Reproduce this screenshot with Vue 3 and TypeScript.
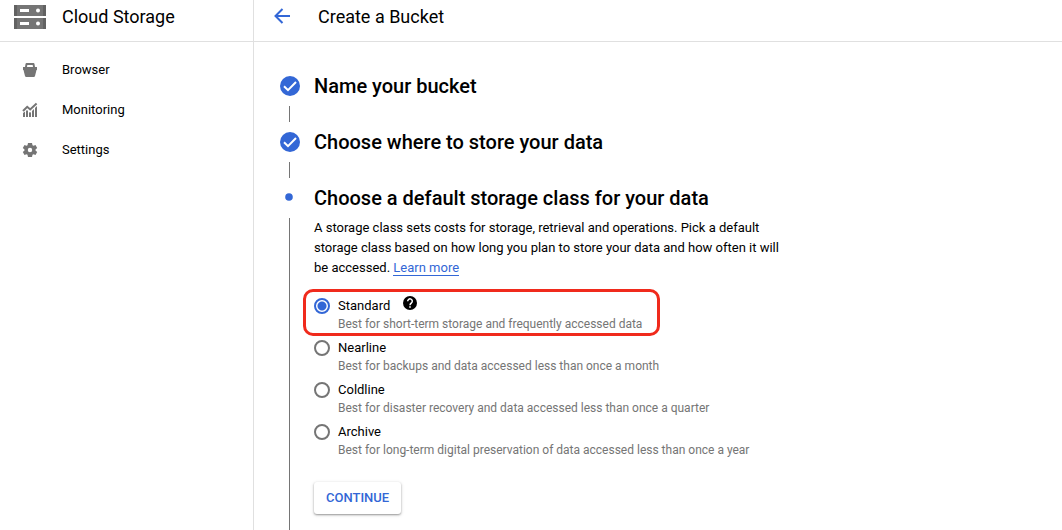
<script setup lang="ts">
import { ref } from 'vue'

interface StorageClass {
  id: string
  name: string
  detail: string
}

const navItems = [
  { id: 'browser', label: 'Browser' },
  { id: 'monitoring', label: 'Monitoring' },
  { id: 'settings', label: 'Settings' },
]

const storageClasses: StorageClass[] = [
  { id: 'standard', name: 'Standard', detail: 'Best for short-term storage and frequently accessed data' },
  { id: 'nearline', name: 'Nearline', detail: 'Best for backups and data accessed less than once a month' },
  { id: 'coldline', name: 'Coldline', detail: 'Best for disaster recovery and data accessed less than once a quarter' },
  { id: 'archive', name: 'Archive', detail: 'Best for long-term digital preservation of data accessed less than once a year' },
]

const completedSteps = ['Name your bucket', 'Choose where to store your data']
const selected = ref('standard')
</script>

<template>
  <div class="page">
    <aside class="sidebar">
      <header class="bar product">
        <svg class="product-icon" width="32" height="24" viewBox="0 0 32 24" aria-hidden="true">
          <path fill="#757575" d="M0 0h32v11H0zM0 13h32v11H0z" />
          <path fill="#626262" d="M0 0h3v11H0zM0 13h3v11H0zM29 0h3v11h-3zM29 13h3v11h-3z" />
          <path fill="#fff" d="M6 4h9v3H6zM6 17h9v3H6z" />
          <circle cx="24" cy="5.5" r="2" fill="#fff" />
          <circle cx="24" cy="18.5" r="2" fill="#fff" />
        </svg>
        <span>Cloud Storage</span>
      </header>
      <nav class="nav" aria-label="Cloud Storage">
        <a v-for="item in navItems" :key="item.id" class="nav-link" href="#">
          <svg width="16" height="16" viewBox="0 0 16 16" fill="#757575" aria-hidden="true">
            <path
              v-if="item.id === 'browser'"
              fill-rule="evenodd"
              d="M4.500 1h7Q12.300 1 12.500 2L13 5h2v3h-.5L13 14Q12.700 15 11.800 15H4.200Q3.300 15 3 14L1.500 8H1V5h2l.5-3Q3.700 1 4.500 1zM5.300 3 5 5h6l-.3-2z"
            />
            <g v-else-if="item.id === 'monitoring'">
              <path d="M1 11l2-1.500V15H1zM4 9 5 8l1 1v6H4zM7 10l1 .8 1-.8v5H7zM10 9l2-2v8h-2zM13 6l2-2v11h-2z" />
              <path fill="none" stroke="#757575" stroke-width="2" d="M1 9 5.200 4.800 8.200 7.500 14.600 1.500" />
            </g>
            <path
              v-else
              fill-rule="evenodd"
              d="M6 1h4l.5 2.200 1 .6 2-.8 1.700 3L13.500 7.400v1.200L15.200 10l-1.700 3-2-.8-1 .6L10 15H6l-.5-2.200-1-.6-2 .8L.8 10l1.700-1.400V7.400L.8 6l1.700-3 2 .8 1-.6zM8 5.800a2.200 2.200 0 1 0 0 4.400 2.200 2.200 0 0 0 0-4.400z"
            />
          </svg>
          <span>{{ item.label }}</span>
        </a>
      </nav>
    </aside>

    <div class="workspace">
      <header class="bar title-bar">
        <button class="back" type="button" aria-label="Back">
          <svg width="16" height="16" viewBox="0 0 16 16" fill="none" stroke="#3367d6" stroke-width="2" aria-hidden="true">
            <path d="M16 8H1.500M8.500 1 1.500 8l7 7" />
          </svg>
        </button>
        <h1>Create a Bucket</h1>
      </header>

      <main class="steps">
        <section v-for="step in completedSteps" :key="step" class="step">
          <div class="rail">
            <svg class="marker" width="20" height="20" viewBox="0 0 20 20" aria-hidden="true">
              <circle cx="10" cy="10" r="10" fill="#3367d6" />
              <path d="M4 10.200 8 14.200 16 6" fill="none" stroke="#fff" stroke-width="2" />
            </svg>
            <span class="connector"></span>
          </div>
          <h2>{{ step }}</h2>
        </section>

        <section class="step current">
          <div class="rail">
            <svg class="marker" width="20" height="20" viewBox="0 0 20 20" aria-hidden="true">
              <circle cx="9" cy="9" r="3.800" fill="#3367d6" />
            </svg>
            <span class="connector"></span>
          </div>
          <div class="content">
            <h2>Choose a default storage class for your data</h2>
            <p class="intro">
              A storage class sets costs for storage, retrieval and operations. Pick a default
              storage class based on how long you plan to store your data and how often it will
              be accessed. <a href="#">Learn more</a>
            </p>
            <div class="options" role="radiogroup" aria-label="Default storage class">
              <div
                v-for="option in storageClasses"
                :key="option.id"
                class="option"
                :class="{ highlighted: option.id === 'standard' }"
              >
                <input
                  :id="option.id"
                  v-model="selected"
                  type="radio"
                  name="storage-class"
                  :value="option.id"
                  :aria-describedby="option.id + '-detail'"
                />
                <div class="name">
                  <label :for="option.id">{{ option.name }}</label>
                  <button v-if="option.id === 'standard'" class="help" type="button" aria-label="About storage classes">
                    <svg width="14" height="14" viewBox="0 0 14 14" aria-hidden="true">
                      <circle cx="7" cy="7" r="7" fill="#000" />
                      <path d="M4.700 5.300a2.300 2.300 0 1 1 3.700 1.700Q7 7.900 7 9.200" fill="none" stroke="#fff" stroke-width="1.500" />
                      <path d="M6.200 10.200h1.600v1.600H6.200z" fill="#fff" />
                    </svg>
                  </button>
                </div>
                <p :id="option.id + '-detail'" class="detail">{{ option.detail }}</p>
              </div>
            </div>
            <button class="continue" type="button">CONTINUE</button>
          </div>
        </section>
      </main>
    </div>
  </div>
</template>

<style>
body {
  margin: 0;
  background: #fff;
}
</style>

<style scoped>
.page {
  display: grid;
  grid-template-columns: 254px minmax(0, 1fr);
  min-height: 100vh;
  color: #000;
  font-family: Roboto, "Liberation Sans", sans-serif;
  font-size: 13px;
}

h1,
h2,
p {
  margin: 0;
}

button {
  padding: 0;
  border: 0;
  background: none;
  font-family: inherit;
  cursor: pointer;
}

svg {
  display: block;
}

.sidebar {
  border-right: 1px solid #e0e0e0;
}

.bar {
  display: flex;
  align-items: flex-start;
  box-sizing: border-box;
  height: 42px;
  padding-top: 4px;
  border-bottom: 1px solid #e0e0e0;
  font-size: 18px;
  line-height: 26px;
}

.product {
  gap: 16px;
  padding-left: 14px;
}

.product-icon {
  margin-top: 1px;
}

.nav {
  display: flex;
  flex-direction: column;
  padding-top: 8px;
}

.nav-link {
  display: flex;
  align-items: center;
  gap: 24px;
  height: 40px;
  padding-left: 22px;
  color: inherit;
  line-height: 16px;
  text-decoration: none;
}

.workspace {
  display: flex;
  flex-direction: column;
}

.title-bar {
  gap: 28px;
  padding-left: 20px;
}

.back {
  margin-top: 4px;
}

h1 {
  font-size: 18px;
  font-weight: 400;
}

.steps {
  display: flex;
  flex: 1;
  flex-direction: column;
  padding: 32px 24px 0 26px;
}

.step {
  display: flex;
  gap: 14px;
  min-height: 56px;
}

.current {
  flex: 1;
}

.rail {
  display: flex;
  flex-direction: column;
  width: 20px;
}

.marker {
  margin: 2px 0;
}

.connector {
  flex: 1;
  width: 1px;
  margin: 8px 0 8px 9px;
  background: #757575;
}

.current .connector {
  margin-bottom: 0;
}

h2 {
  font-size: 20px;
  font-weight: 500;
  line-height: 24px;
}

.content {
  flex: 1;
  padding-bottom: 16px;
}

.intro {
  max-width: 480px;
  margin-top: 8px;
  line-height: 20px;
}

.intro a {
  border-bottom: 1px solid #3367d6;
  color: #3367d6;
  text-decoration: none;
}

.options {
  display: flex;
  flex-direction: column;
  align-items: flex-start;
  gap: 6px;
  margin-top: 19px;
}

.option {
  position: relative;
  display: grid;
  grid-template-columns: 16px auto;
  column-gap: 8px;
}

.highlighted::after {
  position: absolute;
  inset: -8px -18px -3px -11px;
  border: 3px solid #f02a1c;
  border-radius: 10px;
  content: "";
  pointer-events: none;
}

.option input {
  appearance: none;
  box-sizing: border-box;
  width: 16px;
  height: 16px;
  margin: 1px 0 0;
  border: 2px solid #757575;
  border-radius: 50%;
}

.option input:checked {
  border-color: #3367d6;
  background: radial-gradient(circle, #3367d6 4px, transparent 5px);
}

.name {
  display: flex;
  align-items: flex-start;
  gap: 13px;
  height: 18px;
  line-height: 18px;
}

.help {
  margin-top: -1px;
}

.detail {
  grid-column: 2;
  color: #757575;
  font-size: 12px;
  line-height: 18px;
}

.continue {
  height: 32px;
  margin-top: 23px;
  padding: 0 12px 2px;
  border-radius: 3px;
  background: #fff;
  box-shadow: 0 1px 2px rgba(0, 0, 0, 0.35), 0 1px 4px rgba(0, 0, 0, 0.12);
  color: #3367d6;
  font-size: 13px;
  font-weight: 500;
}
</style>
